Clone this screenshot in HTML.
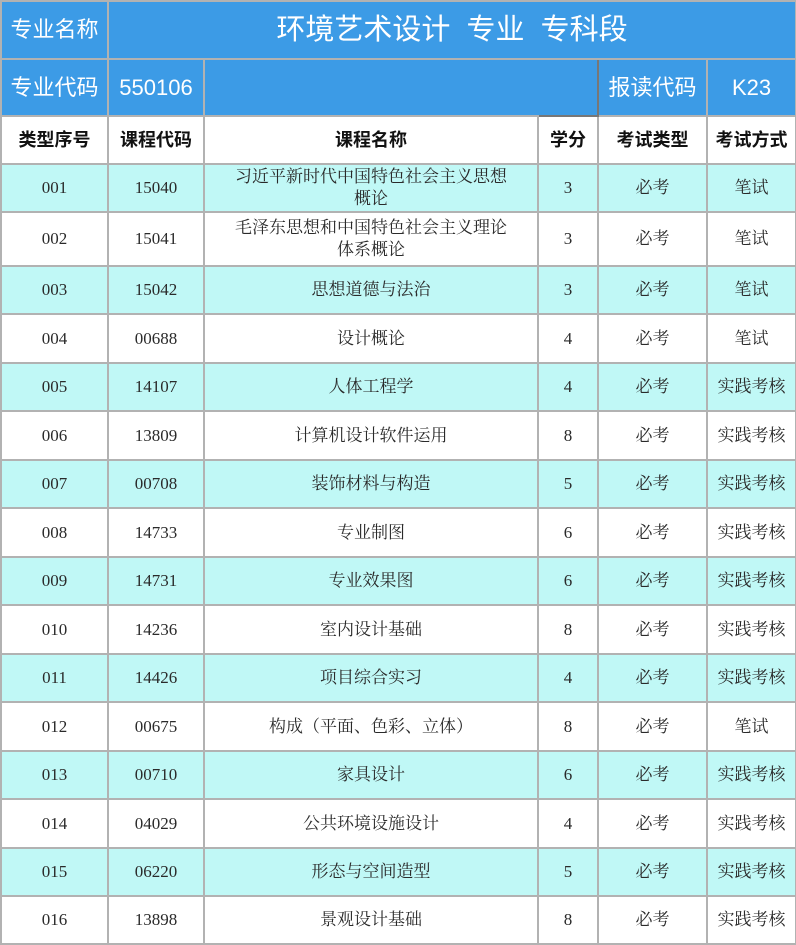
<!DOCTYPE html>
<html><head><meta charset="utf-8"><style>
html,body{margin:0;padding:0;background:#fff;width:796px;height:944px;overflow:hidden}
table{border-collapse:collapse;table-layout:fixed;width:795px;position:absolute;left:0;top:0}
td{border:2px solid #b2b2b2;text-align:center;vertical-align:middle;padding:0;font-family:"Liberation Serif","Noto Serif CJK SC",serif;font-size:17px;color:#2a2a2a;line-height:22px}
tr.b td{background:#3c9be6;color:#fff;font-family:"Liberation Sans","Noto Sans CJK SC",sans-serif;font-size:22px}
tr.b td.t{font-size:29px}
tr.h td{font-family:"Liberation Sans","Noto Sans CJK SC",sans-serif;font-weight:bold;font-size:18px;color:#111}
tr.c td{background:#c0f8f6}
</style></head><body>
<table>
<colgroup><col style="width:107px"><col style="width:96px"><col style="width:334px"><col style="width:60px"><col style="width:109px"><col style="width:89px"></colgroup>
<tr class="b" style="height:58px"><td>专业名称</td><td class="t" colspan="5">环境艺术设计&nbsp; 专业&nbsp; 专科段</td></tr>
<tr class="b" style="height:57px"><td>专业代码</td><td style="font-family:'Liberation Sans',sans-serif">550106</td><td style="border-right-color:#3c9be6"></td><td style="border-color:#777"></td><td>报读代码</td><td style="font-family:'Liberation Sans',sans-serif">K23</td></tr>
<tr class="h" style="height:48px"><td>类型序号</td><td>课程代码</td><td>课程名称</td><td>学分</td><td>考试类型</td><td>考试方式</td></tr>
<tr class="c" style="height:48px"><td>001</td><td>15040</td><td>习近平新时代中国特色社会主义思想<br>概论</td><td>3</td><td>必考</td><td>笔试</td></tr>
<tr style="height:54px"><td>002</td><td>15041</td><td>毛泽东思想和中国特色社会主义理论<br>体系概论</td><td>3</td><td>必考</td><td>笔试</td></tr>
<tr class="c" style="height:48px"><td>003</td><td>15042</td><td>思想道德与法治</td><td>3</td><td>必考</td><td>笔试</td></tr>
<tr style="height:49px"><td>004</td><td>00688</td><td>设计概论</td><td>4</td><td>必考</td><td>笔试</td></tr>
<tr class="c" style="height:48px"><td>005</td><td>14107</td><td>人体工程学</td><td>4</td><td>必考</td><td>实践考核</td></tr>
<tr style="height:49px"><td>006</td><td>13809</td><td>计算机设计软件运用</td><td>8</td><td>必考</td><td>实践考核</td></tr>
<tr class="c" style="height:48px"><td>007</td><td>00708</td><td>装饰材料与构造</td><td>5</td><td>必考</td><td>实践考核</td></tr>
<tr style="height:49px"><td>008</td><td>14733</td><td>专业制图</td><td>6</td><td>必考</td><td>实践考核</td></tr>
<tr class="c" style="height:48px"><td>009</td><td>14731</td><td>专业效果图</td><td>6</td><td>必考</td><td>实践考核</td></tr>
<tr style="height:49px"><td>010</td><td>14236</td><td>室内设计基础</td><td>8</td><td>必考</td><td>实践考核</td></tr>
<tr class="c" style="height:48px"><td>011</td><td>14426</td><td>项目综合实习</td><td>4</td><td>必考</td><td>实践考核</td></tr>
<tr style="height:49px"><td>012</td><td>00675</td><td>构成（平面、色彩、立体）</td><td>8</td><td>必考</td><td>笔试</td></tr>
<tr class="c" style="height:48px"><td>013</td><td>00710</td><td>家具设计</td><td>6</td><td>必考</td><td>实践考核</td></tr>
<tr style="height:49px"><td>014</td><td>04029</td><td>公共环境设施设计</td><td>4</td><td>必考</td><td>实践考核</td></tr>
<tr class="c" style="height:48px"><td>015</td><td>06220</td><td>形态与空间造型</td><td>5</td><td>必考</td><td>实践考核</td></tr>
<tr style="height:48px"><td>016</td><td>13898</td><td>景观设计基础</td><td>8</td><td>必考</td><td>实践考核</td></tr>
</table>
</body></html>
